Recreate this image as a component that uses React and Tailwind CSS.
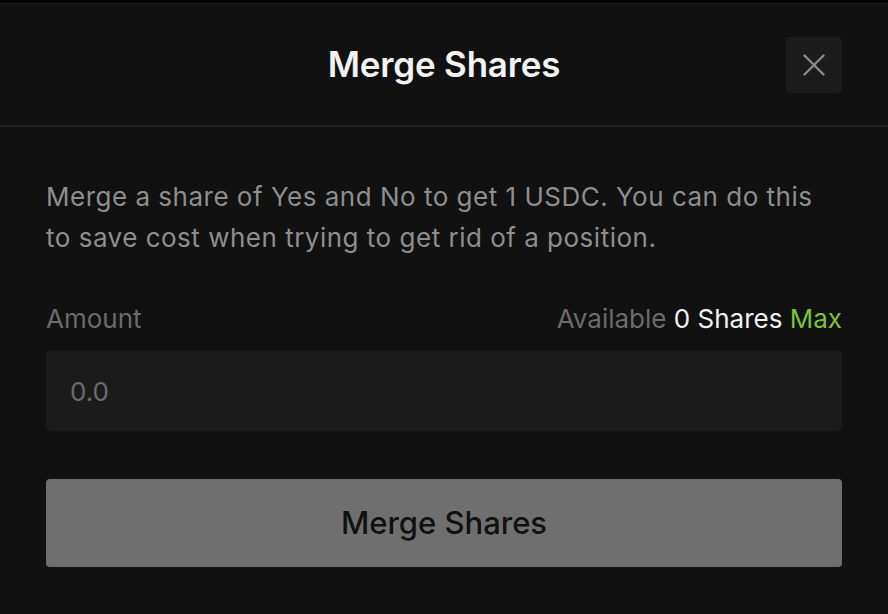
import { X } from "lucide-react";

export default function App() {
  return (
    <div className="w-[888px] h-[614px] bg-black pt-[3px] font-['Inter',sans-serif]">
      <div className="h-full bg-[#111111] border-t border-[#222222]">
        <div className="relative h-[123px] flex items-center justify-center border-b-2 border-[#222222]">
          <h1 className="text-[35px] font-semibold text-[#f2f2f2] tracking-[-0.2px]">Merge Shares</h1>
          <button className="absolute right-[46px] top-[33px] w-[56px] h-[56px] rounded bg-[#1b1b1b] flex items-center justify-center text-[#8c8c8c]">
            <X size={38} strokeWidth={1.5} />
          </button>
        </div>
        <div className="px-[46px] pt-[49px]">
          <p className="text-[26px] leading-[41px] tracking-[0.5px] text-[#8e8e8e]">
            Merge a share of Yes and No to get 1 USDC. You can do this to save cost when trying to get rid of a position.
          </p>
          <div className="mt-[41px] flex items-center justify-between text-[26px] leading-[40px]">
            <span className="text-[#6b6b6b]">Amount</span>
            <span className="text-[#6b6b6b]">
              Available <span className="text-[#f2f2f2]">0 Shares</span>{" "}
              <span className="text-[#7cc23a]">Max</span>
            </span>
          </div>
          <div className="mt-[12px] h-[80px] rounded bg-[#1b1b1b] flex items-center px-[24px]">
            <span className="text-[26px] text-[#6b6b6b]">0.0</span>
          </div>
          <button className="mt-[48px] w-full h-[88px] rounded bg-[#6f6f6f] text-[31px] font-medium text-[#111111]">
            Merge Shares
          </button>
        </div>
      </div>
    </div>
  );
}
